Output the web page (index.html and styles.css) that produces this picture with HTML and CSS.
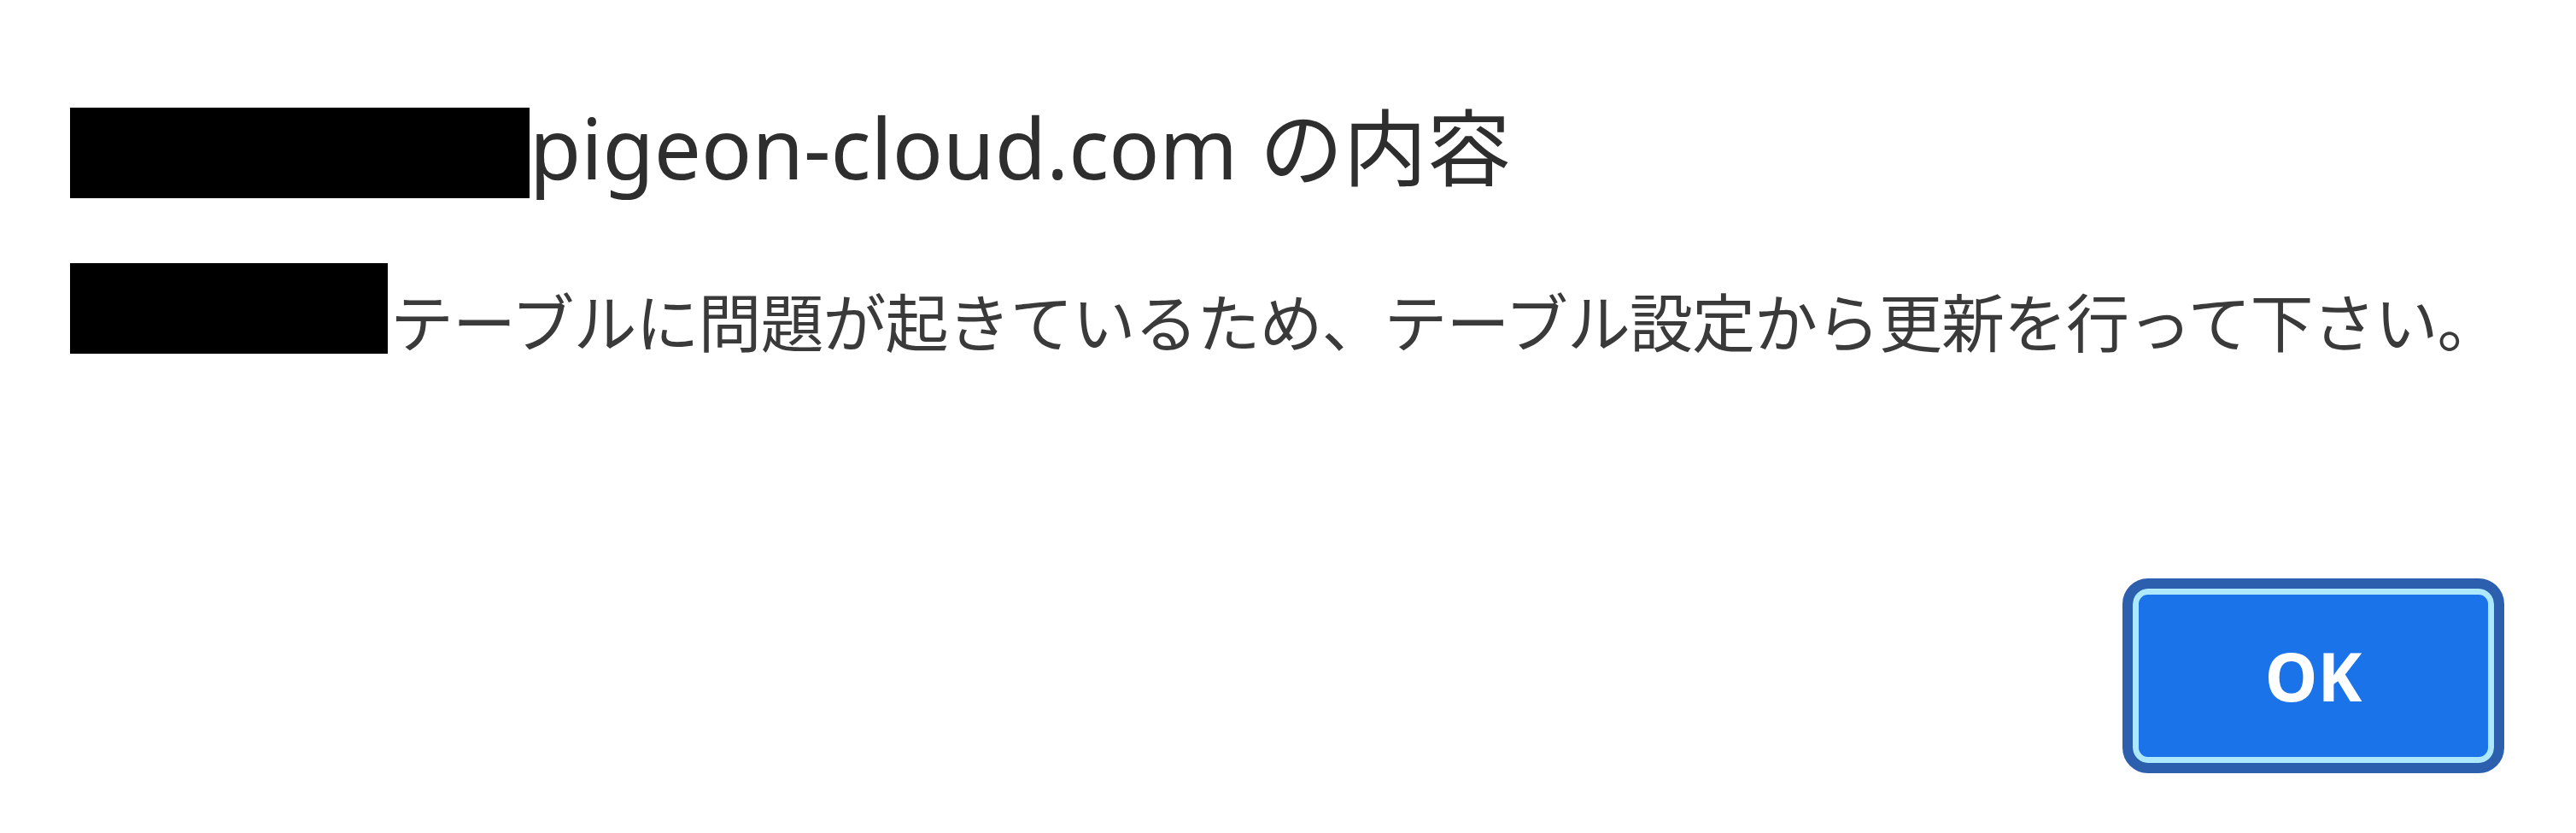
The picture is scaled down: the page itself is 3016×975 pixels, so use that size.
FILE: index.html
```html
<!DOCTYPE html>
<html>
<head>
    <meta charset="UTF-8">
    <title>pigeon-cloud.com の内容</title>
    <link rel="stylesheet" href="styles.css">
</head>
<body>
    <div class="dialog">
        <!-- Titel -->
        <div class="dialog-title">
            <span class="redacted host"></span>
            <span class="title-text">pigeon-cloud.com の内容</span>
        </div>

        <!-- Meldung -->
        <div class="dialog-message">
            <span class="redacted table-name"></span>
            <span class="message-text">テーブルに問題が起きているため、テーブル設定から更新を行って下さい。</span>
        </div>

        <div class="dialog-buttons">
            <button class="ok-button" autofocus>OK</button>
        </div>
    </div>
</body>
</html>
```

FILE: styles.css
```css
body {
    margin: 0;
    padding: 0;
    background-color: #fff;
    font-family: "Noto Sans", "Noto Sans CJK JP", sans-serif;
}

.dialog {
    display: flex;
    flex-direction: column;
    padding: 126px 84px 0 82px;
}

.dialog-title,
.dialog-message {
    display: flex;
    align-items: flex-start;
    white-space: nowrap;
}

.redacted {
    display: block;
    height: 106px;
    background-color: #000;
    flex-shrink: 0;
}

.host { width: 538px; }
.table-name { width: 372px; }

.title-text {
    font-size: 98px;
    line-height: 92px;
    color: #2e2e2e;
}

.dialog-message {
    margin-top: 76px;
}

.message-text {
    font-family: "Noto Sans CJK JP", sans-serif;
    font-size: 74px;
    line-height: 132px;
    letter-spacing: -1px;
    color: #3a3a3a;
    margin-left: 3px;
}

.dialog-buttons {
    display: flex;
    justify-content: flex-end;
    margin-top: 237px;
}

.ok-button {
    width: 447px;
    height: 228px;
    box-sizing: border-box;
    display: flex;
    align-items: center;
    justify-content: center;
    padding: 0;
    background-color: #1a73e8;
    border: 12px solid #2c5fae;
    border-radius: 30px;
    box-shadow: inset 0 0 0 7px #aee8fc;
    color: #fff;
    font-family: "Noto Sans", sans-serif;
    font-size: 78px;
    font-weight: bold;
    outline: none;
    cursor: pointer;
}
```
